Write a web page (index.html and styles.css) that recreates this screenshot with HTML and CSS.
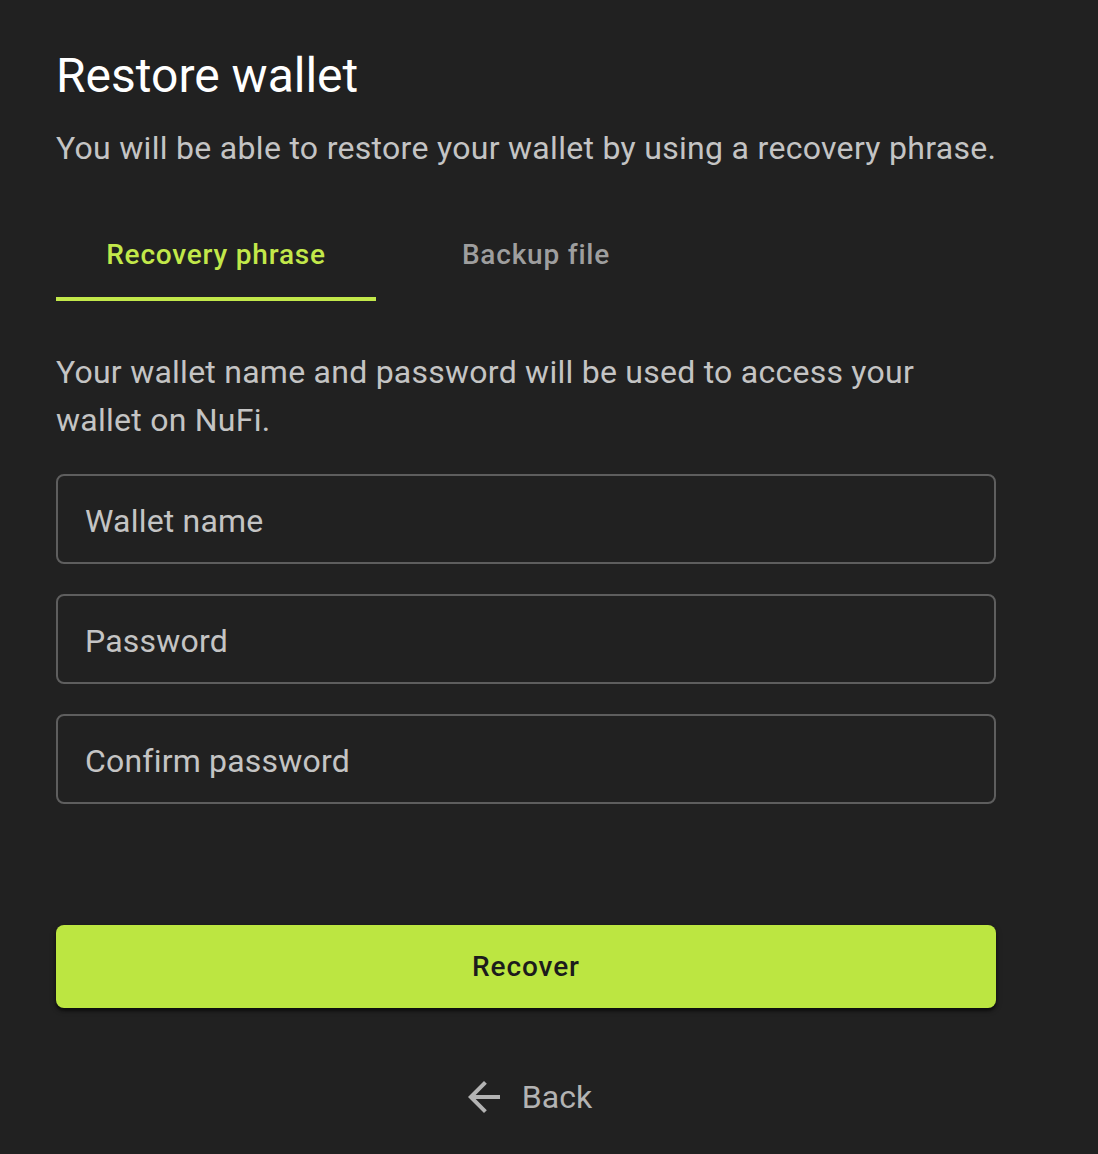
FILE: index.html
```html
<!DOCTYPE html>
<html>
<head>
<meta charset="utf-8">
<link rel="stylesheet" href="styles.css">
</head>
<body>
<main class="page">
  <h1 class="title">Restore wallet</h1>
  <p class="subtitle">You will be able to restore your wallet by using a recovery phrase.</p>
  <div class="tabs">
    <div class="tab active">Recovery phrase</div>
    <div class="tab">Backup file</div>
  </div>
  <p class="info">Your wallet name and password will be used to access your wallet on NuFi.</p>
  <div class="fields">
    <div class="field"><span class="label">Wallet name</span></div>
    <div class="field"><span class="label">Password</span></div>
    <div class="field"><span class="label">Confirm password</span></div>
  </div>
  <button class="recover">Recover</button>
  <div class="back">
    <svg class="arrow" width="48" height="48" viewBox="0 0 24 24"><path d="M20 11H7.83l5.59-5.59L12 4l-8 8 8 8 1.41-1.41L7.83 13H20v-2z" fill="#b3b3b3"/></svg>
    <span class="back-text">Back</span>
  </div>
</main>
</body>
</html>
```
FILE: styles.css
```css
html, body {
  margin: 0;
  padding: 0;
  background: #212121;
  font-family: Roboto, "Noto Sans", sans-serif;
}
.page {
  width: 940px;
  padding: 0 0 0 56px;
  display: flex;
  flex-direction: column;
}
.title {
  margin: 46px 0 0 0;
  font-size: 48px;
  font-weight: 400;
  line-height: 60px;
  color: #ffffff;
}
.subtitle {
  margin: 20px 0 0 0;
  font-size: 32px;
  line-height: 44px;
  color: #c4c4c4;
  letter-spacing: 0.3px;
  white-space: nowrap;
}
.tabs {
  display: flex;
  margin-top: 37px;
}
.tab {
  width: 320px;
  height: 94px;
  box-sizing: border-box;
  display: flex;
  align-items: center;
  justify-content: center;
  font-size: 28px;
  font-weight: 500;
  letter-spacing: 0.8px;
  color: #9e9e9e;
  padding-top: 4px;
  border-bottom: 4px solid transparent;
}
.tab.active {
  color: #c2e84a;
  border-bottom-color: #c2e84a;
}
.info {
  margin: 47px 0 0 0;
  font-size: 32px;
  line-height: 48px;
  color: #c4c4c4;
  letter-spacing: 0.25px;
}
.fields {
  display: flex;
  flex-direction: column;
  gap: 30px;
  margin-top: 30px;
}
.field {
  height: 90px;
  box-sizing: border-box;
  border: 2px solid #5e5e5e;
  border-radius: 8px;
  display: flex;
  align-items: center;
  padding: 4px 0 0 27px;
}
.label {
  font-size: 32px;
  color: #c4c4c4;
  letter-spacing: 0.2px;
}
.recover {
  margin-top: 121px;
  height: 83px;
  border: none;
  border-radius: 8px;
  background: #bce641;
  color: #1c1c1c;
  font-family: Roboto, "Noto Sans", sans-serif;
  font-size: 28px;
  font-weight: 500;
  letter-spacing: 0.9px;
  box-shadow: 0 3px 3px rgba(0,0,0,0.45), 0 2px 6px rgba(0,0,0,0.3);
}
.back {
  margin-top: 65px;
  display: flex;
  align-items: center;
  justify-content: center;
  gap: 14px;
  height: 48px;
}
.back-text {
  font-size: 32px;
  color: #b3b3b3;
}
```
